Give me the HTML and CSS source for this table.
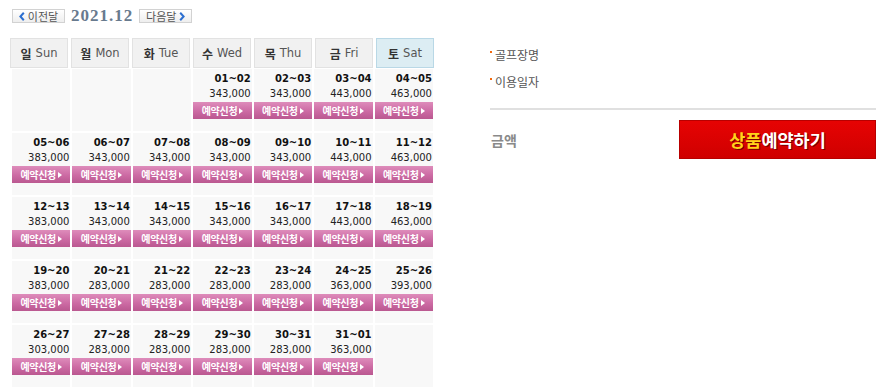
FILE: index.html
```html
<!DOCTYPE html>
<html lang="ko">
<head>
<meta charset="utf-8">
<title>예약 달력</title>
<link rel="stylesheet" href="styles.css">
</head>
<body>
<div class="page">
  <div class="cal">
    <div class="nav">
      <span class="navbtn prev"><svg width="6" height="9" viewBox="0 0 6 9"><path d="M4.8 0.8 L1.4 4.5 L4.8 8.2" fill="none" stroke="#2d6fd0" stroke-width="2"/></svg>이전달</span>
      <span class="month">2021.12</span>
      <span class="navbtn next">다음달<svg width="6" height="9" viewBox="0 0 6 9"><path d="M1.2 0.8 L4.6 4.5 L1.2 8.2" fill="none" stroke="#2d6fd0" stroke-width="2"/></svg></span>
    </div>
    <div class="week">
      <div class="wd"><b>일</b> Sun</div>
      <div class="wd"><b>월</b> Mon</div>
      <div class="wd"><b>화</b> Tue</div>
      <div class="wd"><b>수</b> Wed</div>
      <div class="wd"><b>목</b> Thu</div>
      <div class="wd"><b>금</b> Fri</div>
      <div class="wd sat"><b>토</b> Sat</div>
    </div>
    <div class="days">
      <div class="day"></div>
      <div class="day"></div>
      <div class="day"></div>
      <div class="day"><div class="dt">01~02</div><div class="pr">343,000</div><a class="rsv">예약신청<i></i></a></div>
      <div class="day"><div class="dt">02~03</div><div class="pr">343,000</div><a class="rsv">예약신청<i></i></a></div>
      <div class="day"><div class="dt">03~04</div><div class="pr">443,000</div><a class="rsv">예약신청<i></i></a></div>
      <div class="day"><div class="dt">04~05</div><div class="pr">463,000</div><a class="rsv">예약신청<i></i></a></div>

      <div class="day"><div class="dt">05~06</div><div class="pr">383,000</div><a class="rsv">예약신청<i></i></a></div>
      <div class="day"><div class="dt">06~07</div><div class="pr">343,000</div><a class="rsv">예약신청<i></i></a></div>
      <div class="day"><div class="dt">07~08</div><div class="pr">343,000</div><a class="rsv">예약신청<i></i></a></div>
      <div class="day"><div class="dt">08~09</div><div class="pr">343,000</div><a class="rsv">예약신청<i></i></a></div>
      <div class="day"><div class="dt">09~10</div><div class="pr">343,000</div><a class="rsv">예약신청<i></i></a></div>
      <div class="day"><div class="dt">10~11</div><div class="pr">443,000</div><a class="rsv">예약신청<i></i></a></div>
      <div class="day"><div class="dt">11~12</div><div class="pr">463,000</div><a class="rsv">예약신청<i></i></a></div>

      <div class="day"><div class="dt">12~13</div><div class="pr">383,000</div><a class="rsv">예약신청<i></i></a></div>
      <div class="day"><div class="dt">13~14</div><div class="pr">343,000</div><a class="rsv">예약신청<i></i></a></div>
      <div class="day"><div class="dt">14~15</div><div class="pr">343,000</div><a class="rsv">예약신청<i></i></a></div>
      <div class="day"><div class="dt">15~16</div><div class="pr">343,000</div><a class="rsv">예약신청<i></i></a></div>
      <div class="day"><div class="dt">16~17</div><div class="pr">343,000</div><a class="rsv">예약신청<i></i></a></div>
      <div class="day"><div class="dt">17~18</div><div class="pr">443,000</div><a class="rsv">예약신청<i></i></a></div>
      <div class="day"><div class="dt">18~19</div><div class="pr">463,000</div><a class="rsv">예약신청<i></i></a></div>

      <div class="day"><div class="dt">19~20</div><div class="pr">383,000</div><a class="rsv">예약신청<i></i></a></div>
      <div class="day"><div class="dt">20~21</div><div class="pr">283,000</div><a class="rsv">예약신청<i></i></a></div>
      <div class="day"><div class="dt">21~22</div><div class="pr">283,000</div><a class="rsv">예약신청<i></i></a></div>
      <div class="day"><div class="dt">22~23</div><div class="pr">283,000</div><a class="rsv">예약신청<i></i></a></div>
      <div class="day"><div class="dt">23~24</div><div class="pr">283,000</div><a class="rsv">예약신청<i></i></a></div>
      <div class="day"><div class="dt">24~25</div><div class="pr">363,000</div><a class="rsv">예약신청<i></i></a></div>
      <div class="day"><div class="dt">25~26</div><div class="pr">393,000</div><a class="rsv">예약신청<i></i></a></div>

      <div class="day"><div class="dt">26~27</div><div class="pr">303,000</div><a class="rsv">예약신청<i></i></a></div>
      <div class="day"><div class="dt">27~28</div><div class="pr">283,000</div><a class="rsv">예약신청<i></i></a></div>
      <div class="day"><div class="dt">28~29</div><div class="pr">283,000</div><a class="rsv">예약신청<i></i></a></div>
      <div class="day"><div class="dt">29~30</div><div class="pr">283,000</div><a class="rsv">예약신청<i></i></a></div>
      <div class="day"><div class="dt">30~31</div><div class="pr">283,000</div><a class="rsv">예약신청<i></i></a></div>
      <div class="day"><div class="dt">31~01</div><div class="pr">363,000</div><a class="rsv">예약신청<i></i></a></div>
      <div class="day"></div>
    </div>
  </div>
  <div class="info">
    <ul class="meta">
      <li>골프장명</li>
      <li>이용일자</li>
    </ul>
    <div class="sum">
      <span class="amt">금액</span>
      <a class="book"><span class="hl">상품</span>예약하기</a>
    </div>
  </div>
</div>
</body>
</html>
```

FILE: styles.css
```css
html, body {
  margin: 0;
  padding: 0;
  background: #fff;
}
body {
  font-family: "DejaVu Sans", "Noto Sans CJK KR", sans-serif;
  color: #222;
}
.page {
  display: flex;
  align-items: flex-start;
}
.cal {
  width: 424px;
  margin-left: 10px;
  padding-top: 9px;
}
.nav {
  display: flex;
  align-items: center;
  height: 14px;
  padding-left: 2px;
}
.navbtn {
  display: inline-flex;
  align-items: center;
  justify-content: center;
  gap: 3px;
  box-sizing: border-box;
  height: 14px;
  width: 53px;
  border: 1px solid #d2d2d2;
  background: linear-gradient(#ffffff, #eeeeee);
  font-family: "Noto Sans CJK KR", sans-serif;
  font-size: 11px;
  line-height: 12px;
  color: #555;
}
.month {
  margin: 0 6px;
  font-family: "Liberation Serif", serif;
  font-weight: bold;
  font-size: 17px;
  letter-spacing: 1px;
  line-height: 14px;
  color: #687a8e;
}
.week {
  display: grid;
  grid-template-columns: repeat(7, 58px);
  gap: 3px;
  margin-top: 15px;
}
.wd {
  box-sizing: border-box;
  height: 30px;
  border: 1px solid #e2e2e2;
  background: #f1f1f1;
  display: flex;
  align-items: center;
  justify-content: center;
  gap: 4px;
  font-size: 11.5px;
  color: #555;
}
.wd b {
  font-family: "Noto Sans CJK KR", sans-serif;
  font-size: 12px;
  color: #333;
}
.wd.sat {
  background: #dcedf3;
  border-color: #b9d8e6;
}
.days {
  display: grid;
  grid-template-columns: repeat(7, 1fr);
  grid-auto-rows: 62px;
  gap: 2px;
  width: 421px;
  margin-left: 2px;
  margin-top: 1px;
}
.day {
  background: #f8f8f8;
  padding-top: 3px;
  box-sizing: border-box;
}
.dt {
  text-align: right;
  padding-right: 1px;
  font-weight: bold;
  font-size: 10px;
  line-height: 14px;
  color: #111;
}
.pr {
  text-align: right;
  padding-right: 1px;
  font-size: 10px;
  line-height: 16px;
  color: #222;
}
.rsv {
  display: flex;
  align-items: center;
  justify-content: center;
  gap: 2px;
  height: 17px;
  background: linear-gradient(#de8cbb, #cc6aa3 55%, #ba5890);
  color: #fff;
  font-family: "Noto Sans CJK KR", sans-serif;
  font-weight: bold;
  font-size: 10px;
  letter-spacing: -0.3px;
}
.rsv i {
  display: inline-block;
  width: 0;
  height: 0;
  border-left: 4px solid #fff;
  border-top: 3.5px solid transparent;
  border-bottom: 3.5px solid transparent;
}
.info {
  margin-left: 56px;
  width: 386px;
  padding-top: 41px;
}
.meta {
  list-style: none;
  margin: 0;
  padding: 0;
  font-family: "Noto Sans CJK KR", sans-serif;
  font-size: 12px;
  line-height: 27px;
  color: #555;
  border-bottom: 2px solid #e0e0e0;
  padding-bottom: 13px;
}
.meta li::before {
  content: "";
  display: inline-block;
  width: 2px;
  height: 2px;
  background: #f26a0f;
  margin-right: 3px;
  vertical-align: 7px;
}
.sum {
  display: flex;
  align-items: center;
  justify-content: space-between;
  margin-top: 10px;
}
.amt {
  padding-left: 1px;
  font-family: "Noto Sans CJK KR", sans-serif;
  font-weight: bold;
  font-size: 14px;
  color: #8a8a8a;
}
.book {
  display: flex;
  align-items: center;
  justify-content: center;
  box-sizing: border-box;
  width: 197px;
  height: 39px;
  background: linear-gradient(#e60303, #cf0000);
  border: 1px solid #b80000;
  font-family: "Noto Sans CJK KR", sans-serif;
  font-weight: bold;
  font-size: 17.5px;
  color: #fff;
  text-shadow: 1px 1px 0 #7a0000;
}
.book .hl {
  color: #ffd21a;
}
```
